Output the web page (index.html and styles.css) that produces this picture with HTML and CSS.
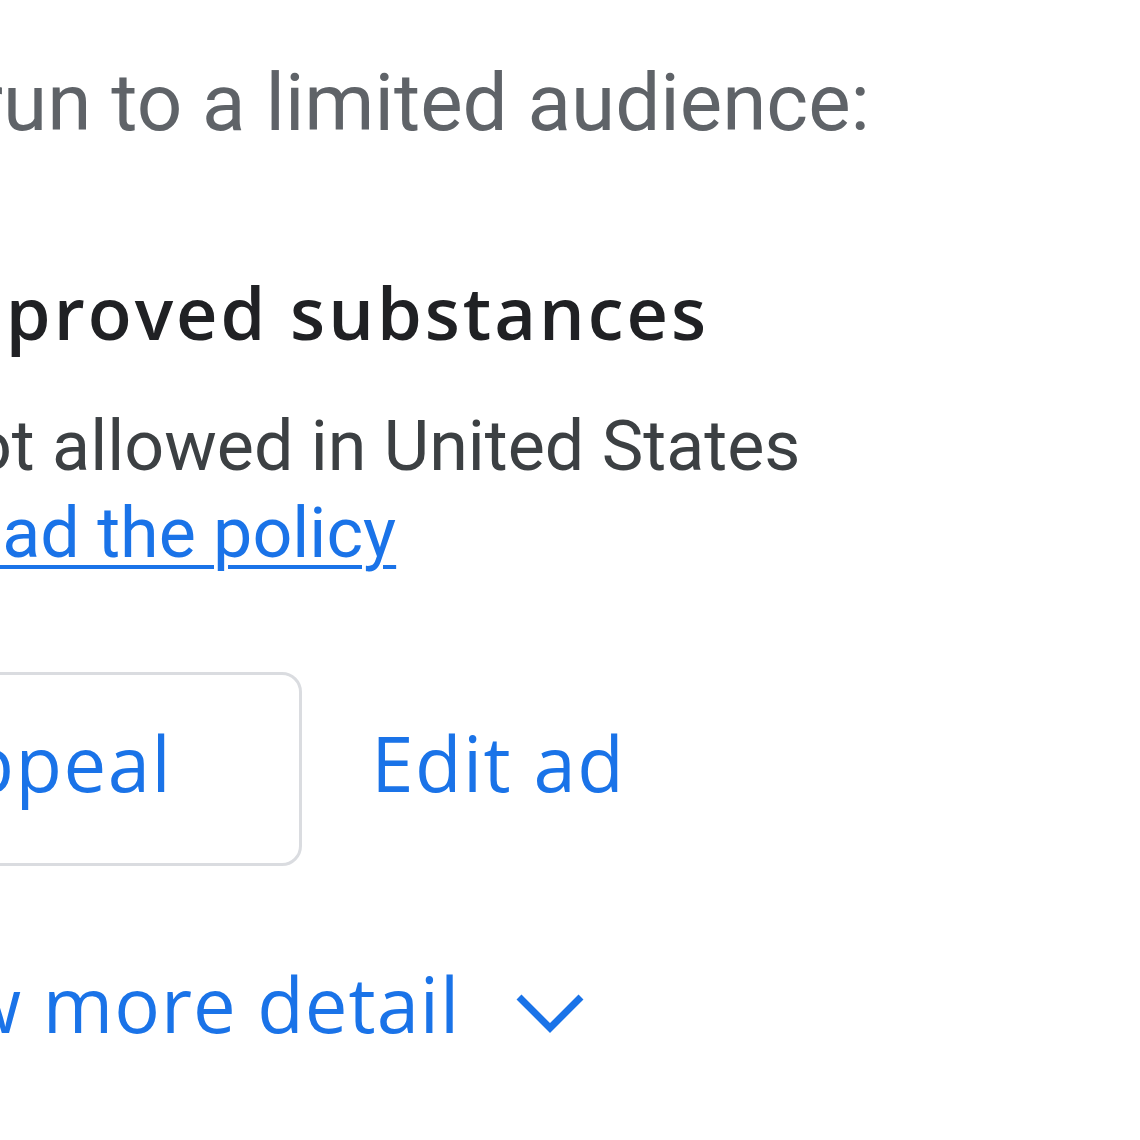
FILE: index.html
```html
<!DOCTYPE html>
<html lang="en">
<head>
<meta charset="utf-8">
<title>Ad policy</title>
<link rel="stylesheet" href="styles.css">
</head>
<body>
<main class="panel">
  <p class="note">run to a limited audience:</p>
  <h2 class="policy-title">Unapproved substances</h2>
  <div class="policy-body">
    <p class="policy-status">Not allowed in United States</p>
    <a class="policy-link" href="#">Read the policy</a>
  </div>
  <div class="actions">
    <button class="btn btn-outline">Appeal</button>
    <button class="btn btn-text">Edit ad</button>
  </div>
  <button class="more">
    <span>View more detail</span>
    <svg class="chevron" width="80" height="50" viewBox="0 0 80 50" aria-hidden="true"><polyline points="7,6 38,37 69,6" fill="none" stroke="#1a73e8" stroke-width="7"/></svg>
  </button>
</main>
</body>
</html>
```
FILE: styles.css
```css
html, body {
  margin: 0;
  background: #ffffff;
  overflow: hidden;
}
.panel {
  padding-top: 53px;
  white-space: nowrap;
}
.note {
  margin: 0 0 0 -24px;
  font: 400 80px/100px Roboto, sans-serif;
  color: #5f6368;
}
.policy-title {
  margin: 109px 0 0 -192px;
  font: 600 72px/100px "Open Sans", sans-serif;
  letter-spacing: 3px;
  color: #202124;
}
.policy-body {
  margin: 41px 0 0 -78px;
  font: 400 70px/87px Roboto, sans-serif;
}
.policy-status {
  margin: 0;
  color: #3c4043;
}
.policy-link {
  display: block;
  color: #1a73e8;
  text-decoration: underline;
  text-decoration-thickness: 4px;
  text-underline-offset: 8px;
}
.actions {
  display: flex;
  align-items: flex-start;
  margin: 95px 0 0 -201px;
}
.btn {
  font: 500 76px/100px "Open Sans", sans-serif;
  letter-spacing: 1.5px;
  color: #1a73e8;
  background: none;
  padding: 38px 127px 50px 116px;
  white-space: nowrap;
}
.btn-outline {
  border: 3px solid #dadce0;
  border-radius: 20px;
}
.btn-text {
  border: 3px solid transparent;
  padding: 38px 40px 50px 29px;
  margin-left: 37px;
}
.more {
  display: flex;
  align-items: flex-start;
  margin: 88px 0 0 -148px;
  padding: 0;
  border: 0;
  background: none;
  font: 500 76px/100px "Open Sans", sans-serif;
  letter-spacing: 1px;
  color: #1a73e8;
}
.chevron {
  margin: 37px 0 0 52px;
}
```
